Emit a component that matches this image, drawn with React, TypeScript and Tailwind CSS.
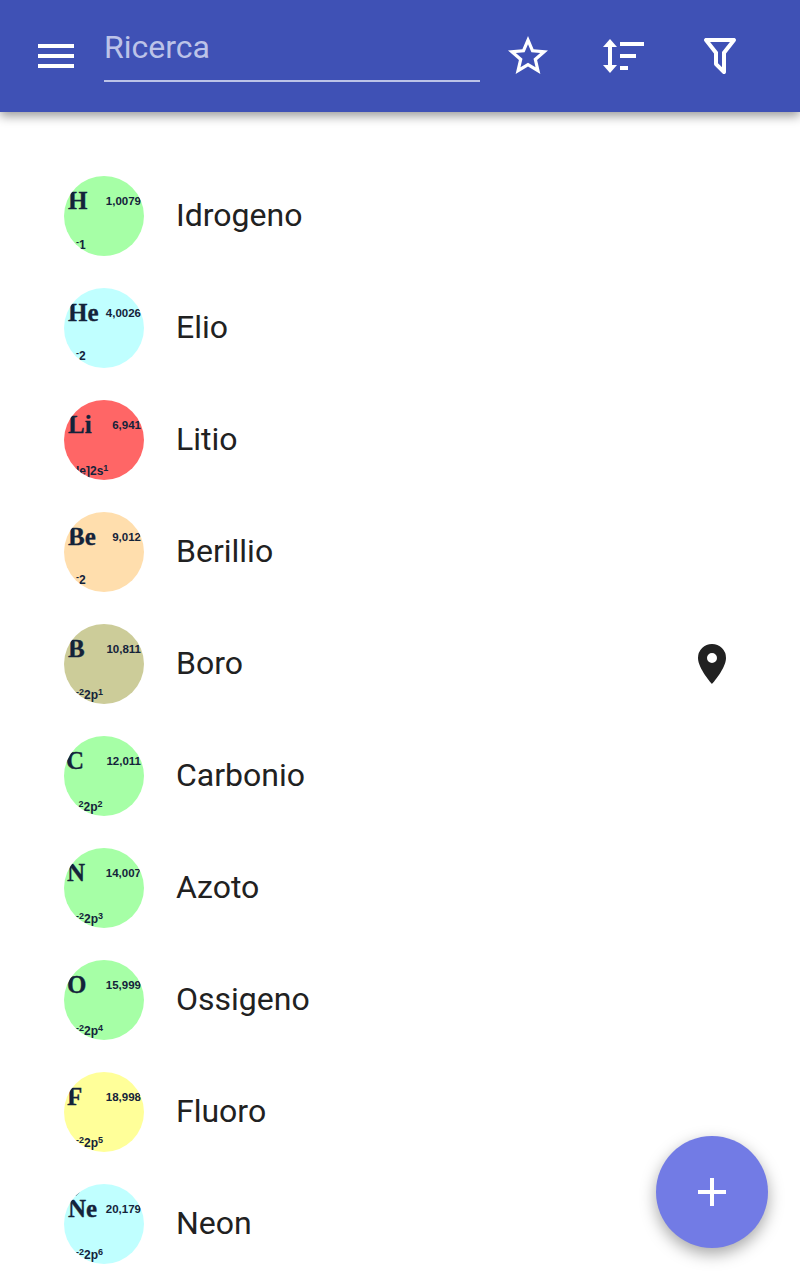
import { ReactNode } from "react";

type Element = {
  name: string;
  symbol: string;
  mass: string;
  config: ReactNode;
  bg: string;
  symbolClass?: string;
  configClass?: string;
  pinned?: boolean;
  tick?: boolean;
};

const Sup = ({ children }: { children: ReactNode }) => (
  <span className="relative -top-[4px] text-[9px]">{children}</span>
);

const elements: Element[] = [
  { name: "Idrogeno", symbol: "H", mass: "1,0079", config: <><Sup>-</Sup>1</>, bg: "bg-[#a6ffa6]", configClass: "mb-[2px]" },
  { name: "Elio", symbol: "He", mass: "4,0026", config: <><Sup>-</Sup>2</>, bg: "bg-[#c0ffff]", configClass: "mb-[3px]" },
  { name: "Litio", symbol: "Li", mass: "6,941", config: <>le]2s<Sup>1</Sup></>, bg: "bg-[#ff6666]" },
  { name: "Berillio", symbol: "Be", mass: "9,012", config: <><Sup>-</Sup>2</>, bg: "bg-[#ffdead]", configClass: "mb-[3px]" },
  { name: "Boro", symbol: "B", mass: "10,811", config: <><Sup>-2</Sup>2p<Sup>1</Sup></>, bg: "bg-[#cccc99]", pinned: true },
  { name: "Carbonio", symbol: "C", mass: "12,011", config: <><Sup>&nbsp;2</Sup>2p<Sup>2</Sup></>, bg: "bg-[#a6ffa6]", symbolClass: "-ml-[2px]" },
  { name: "Azoto", symbol: "N", mass: "14,007", config: <><Sup>-2</Sup>2p<Sup>3</Sup></>, bg: "bg-[#a6ffa6]", symbolClass: "-ml-[1px]" },
  { name: "Ossigeno", symbol: "O", mass: "15,999", config: <><Sup>-2</Sup>2p<Sup>4</Sup></>, bg: "bg-[#a6ffa6]", symbolClass: "-ml-[1px]" },
  { name: "Fluoro", symbol: "F", mass: "18,998", config: <><Sup>-2</Sup>2p<Sup>5</Sup></>, bg: "bg-[#ffff99]", symbolClass: "-ml-[1px]" },
  { name: "Neon", symbol: "Ne", mass: "20,179", config: <><Sup>-2</Sup>2p<Sup>6</Sup></>, bg: "bg-[#c0ffff]", tick: true },
];

function Avatar({ el }: { el: Element }) {
  return (
    <div className={`relative flex h-20 w-20 shrink-0 flex-col justify-between overflow-hidden rounded-full pt-[10px] pb-[1px] pl-[4px] pr-[3px] ${el.bg} text-[#14233a]`}>
      {el.tick && <span className="absolute left-[12px] top-[7px] h-[5px] w-[2px] rotate-45 bg-[#14233a]" />}
      <div className="flex items-start justify-between">
        <span className={`text-[25px] leading-[30px] font-bold font-['Liberation_Serif',serif] [-webkit-text-stroke:0.3px_#14233a] ${el.symbolClass ?? ""}`}>
          {el.symbol}
        </span>
        <span className="mt-[8px] text-[11.5px] leading-[14px] font-bold font-['Liberation_Sans',sans-serif]">
          {el.mass}
        </span>
      </div>
      <span className={`whitespace-nowrap pl-[8px] text-[12px] leading-[14px] font-bold font-['Liberation_Sans',sans-serif] ${el.configClass ?? ""}`}>
        {el.config}
      </span>
    </div>
  );
}

export default function App() {
  return (
    <div className="relative h-[1280px] w-[800px] overflow-hidden bg-white font-['Roboto',sans-serif]">
      {/* Toolbar */}
      <header className="relative z-10 flex h-28 items-center bg-[#3f51b5] shadow-[0_4px_10px_rgba(0,0,0,0.4)]">
        <button className="ml-8 flex h-12 w-12 items-center justify-center text-white">
          <svg width="48" height="48" viewBox="0 0 48 48" fill="currentColor">
            <path d="M6 12h36v4H6zM6 22h36v4H6zM6 32h36v4H6z" />
          </svg>
        </button>
        <div className="ml-6 -mt-[2px] flex h-[54px] w-[376px] items-start border-b-2 border-[#bcc3e8]">
          <span className="text-[32px] leading-[38px] text-[#bcc3e8]">Ricerca</span>
        </div>
        <div className="ml-6 flex h-12 w-12 items-center justify-center text-white">
          <svg width="48" height="48" viewBox="0 0 24 24" fill="currentColor">
            <path d="M22 9.24l-7.19-.62L12 2 9.19 8.63 2 9.24l5.46 4.73L5.82 21 12 17.27 18.18 21l-1.63-7.03L22 9.24zM12 15.4l-3.76 2.27 1-4.28-3.32-2.88 4.38-.38L12 6.1l1.71 4.04 4.38.38-3.32 2.88 1 4.28L12 15.4z" />
          </svg>
        </div>
        <div className="ml-12 flex h-12 w-12 items-center justify-center text-white">
          <svg width="48" height="48" viewBox="0 0 48 48" fill="currentColor">
            <path d="M10 7l7 8h-5v18h5l-7 8-7-8h5V15H3zM20 10h24v4H20zM20 22h16v4H20zM20 34h8v4h-8z" />
          </svg>
        </div>
        <div className="ml-12 flex h-12 w-12 items-center justify-center text-white">
          <svg width="48" height="48" viewBox="0 0 24 24" fill="currentColor">
            <path d="M15,19.88C15.04,20.18 14.94,20.5 14.71,20.71C14.32,21.1 13.69,21.1 13.3,20.71L9.29,16.7C9.06,16.47 8.96,16.16 9,15.87V10.75L4.21,4.62C3.87,4.19 3.95,3.56 4.38,3.22C4.57,3.08 4.78,3 5,3V3H19V3C19.22,3 19.43,3.08 19.62,3.22C20.05,3.56 20.13,4.19 19.79,4.62L15,10.75V19.88M7.04,5L11,10.06V15.58L13,17.58V10.05L16.96,5H7.04Z" />
          </svg>
        </div>
      </header>

      {/* Element list */}
      <ul className="pt-12">
        {elements.map((el) => (
          <li key={el.name} className="flex h-28 items-center pl-16 pr-[64px]">
            <Avatar el={el} />
            <span className="ml-8 -mt-[2px] flex-1 text-[32px] leading-[40px] text-[#212121]">{el.name}</span>
            {el.pinned && (
              <svg width="48" height="48" viewBox="0 0 24 24" fill="#212121">
                <path d="M12,11.5A2.5,2.5 0 0,1 9.5,9A2.5,2.5 0 0,1 12,6.5A2.5,2.5 0 0,1 14.5,9A2.5,2.5 0 0,1 12,11.5M12,2A7,7 0 0,0 5,9C5,14.25 12,22 12,22C12,22 19,14.25 19,9A7,7 0 0,0 12,2Z" />
              </svg>
            )}
          </li>
        ))}
      </ul>

      {/* FAB */}
      <button className="absolute bottom-8 right-8 z-20 flex h-28 w-28 items-center justify-center rounded-full bg-[#727be5] text-white shadow-[0_6px_16px_rgba(0,0,0,0.35)]">
        <svg width="48" height="48" viewBox="0 0 24 24" fill="currentColor">
          <path d="M19,13H13V19H11V13H5V11H11V5H13V11H19V13Z" />
        </svg>
      </button>
    </div>
  );
}
